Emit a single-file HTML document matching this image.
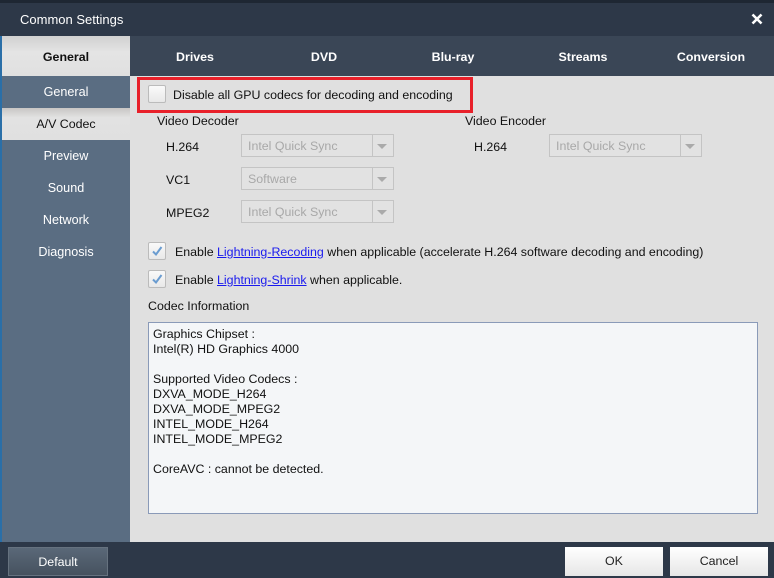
<!DOCTYPE html>
<html><head><style>
*{margin:0;padding:0;box-sizing:border-box}
body{width:774px;height:578px;overflow:hidden;background:#2d3848;font-family:"Liberation Sans",Arial,sans-serif;font-size:12.4px;position:relative}
.a{position:absolute}
.nav{position:absolute;left:2px;width:128px;height:32px;line-height:33px;text-align:center;color:#fff;font-size:12.6px}
.tab{position:absolute;top:36px;height:40px;line-height:43px;color:#fff;font-weight:bold;font-size:12.4px;text-align:center}
.lbl{position:absolute;font-size:12.4px;color:#111}
.sel{position:absolute;width:153px;height:23px;border:1px solid #c4c4c4;background:#e2e2e2;color:#a8a8a8;font-size:12.4px;line-height:23px;padding-left:6px}
.sel:after{content:"";position:absolute;right:0;top:0;width:20px;height:21px;border-left:1px solid #c4c4c4}
.sel i{position:absolute;right:6px;top:9px;border-left:5px solid transparent;border-right:5px solid transparent;border-top:5px solid #aaa}
.cb{position:absolute;width:18px;height:18px;border:1px solid #bbb;background:linear-gradient(#fafafa,#e8e8e8);border-radius:2px}
a{color:#1a1aee;text-decoration:underline}
.btn{position:absolute;top:547px;height:29px;line-height:29px;text-align:center;font-size:12.4px}
</style></head><body>
<div class="a" style="left:0;top:0;width:774px;height:3px;background:#1e2733"></div>
<div class="a" style="left:20px;top:12px;color:#fff;font-size:13px">Common Settings</div>
<svg class="a" style="left:751px;top:13px" width="12" height="12"><path d="M1.5 1.5 L10.5 10.5 M10.5 1.5 L1.5 10.5" stroke="#fff" stroke-width="2.6"/></svg>
<div class="a" style="left:0;top:36px;width:2px;height:506px;background:#2a6fa8"></div>
<div class="a" style="left:2px;top:36px;width:128px;height:506px;background:#5a6d82"></div>
<div class="a" style="left:2px;top:36px;width:128px;height:40px;background:linear-gradient(#d0d0d0,#e4e4e4 40%,#e0e0e0);line-height:42px;text-align:center;font-weight:bold;font-size:12.4px;color:#111">General</div>
<div class="nav" style="top:76px">General</div>
<div class="nav" style="top:108px;background:linear-gradient(#c8c6c4,#e2e2e2 30%,#e0e0e0);color:#111;font-size:12.4px">A/V Codec</div>
<div class="nav" style="top:140px">Preview</div>
<div class="nav" style="top:172px">Sound</div>
<div class="nav" style="top:204px">Network</div>
<div class="nav" style="top:236px">Diagnosis</div>
<div class="a" style="left:130px;top:36px;width:644px;height:40px;background:#3a4656"></div>
<div class="tab" style="left:130px;width:130px">Drives</div>
<div class="tab" style="left:260px;width:128px">DVD</div>
<div class="tab" style="left:388px;width:130px">Blu-ray</div>
<div class="tab" style="left:518px;width:130px">Streams</div>
<div class="tab" style="left:648px;width:126px">Conversion</div>
<div class="a" style="left:130px;top:76px;width:644px;height:466px;background:#e0e0e0"></div>
<div class="a" style="left:137px;top:77px;width:336px;height:36px;border:3px solid #e8202a"></div>
<div class="cb" style="left:148px;top:85px"></div>
<div class="lbl" style="left:173px;top:88px">Disable all GPU codecs for decoding and encoding</div>
<div class="lbl" style="left:157px;top:114px">Video Decoder</div>
<div class="lbl" style="left:465px;top:114px">Video Encoder</div>
<div class="lbl" style="left:166px;top:140px">H.264</div>
<div class="lbl" style="left:166px;top:173px">VC1</div>
<div class="lbl" style="left:166px;top:206px">MPEG2</div>
<div class="lbl" style="left:474px;top:140px">H.264</div>
<div class="sel" style="left:241px;top:134px">Intel Quick Sync<i></i></div>
<div class="sel" style="left:241px;top:167px">Software<i></i></div>
<div class="sel" style="left:241px;top:200px">Intel Quick Sync<i></i></div>
<div class="sel" style="left:549px;top:134px">Intel Quick Sync<i></i></div>
<div class="cb" style="left:148px;top:242px"><svg width="16" height="16" style="position:absolute;left:0;top:0"><path d="M4 8.5 L7 11.5 L12.5 4" stroke="#6a9cd0" stroke-width="2" fill="none"/></svg></div>
<div class="lbl" style="left:175px;top:245px">Enable <a>Lightning-Recoding</a> when applicable (accelerate H.264 software decoding and encoding)</div>
<div class="cb" style="left:148px;top:270px"><svg width="16" height="16" style="position:absolute;left:0;top:0"><path d="M4 8.5 L7 11.5 L12.5 4" stroke="#6a9cd0" stroke-width="2" fill="none"/></svg></div>
<div class="lbl" style="left:175px;top:273px">Enable <a>Lightning-Shrink</a> when applicable.</div>
<div class="lbl" style="left:148px;top:299px">Codec Information</div>
<div class="a" style="left:148px;top:322px;width:610px;height:192px;background:#f4f6f8;border:1px solid #8a9ab8;padding:4px 0 0 4px;font-size:12.4px;line-height:15px;color:#111">Graphics Chipset :<br>Intel(R) HD Graphics 4000<br><br>Supported Video Codecs :<br>DXVA_MODE_H264<br>DXVA_MODE_MPEG2<br>INTEL_MODE_H264<br>INTEL_MODE_MPEG2<br><br>CoreAVC : cannot be detected.</div>
<div class="btn" style="left:8px;width:100px;background:linear-gradient(#5a6878,#46525f);border:1px solid #66727f;color:#fff">Default</div>
<div class="btn" style="left:565px;width:98px;background:linear-gradient(#fff,#e6e6e6);color:#222">OK</div>
<div class="btn" style="left:670px;width:98px;background:linear-gradient(#fff,#e6e6e6);color:#222">Cancel</div>
</body></html>
